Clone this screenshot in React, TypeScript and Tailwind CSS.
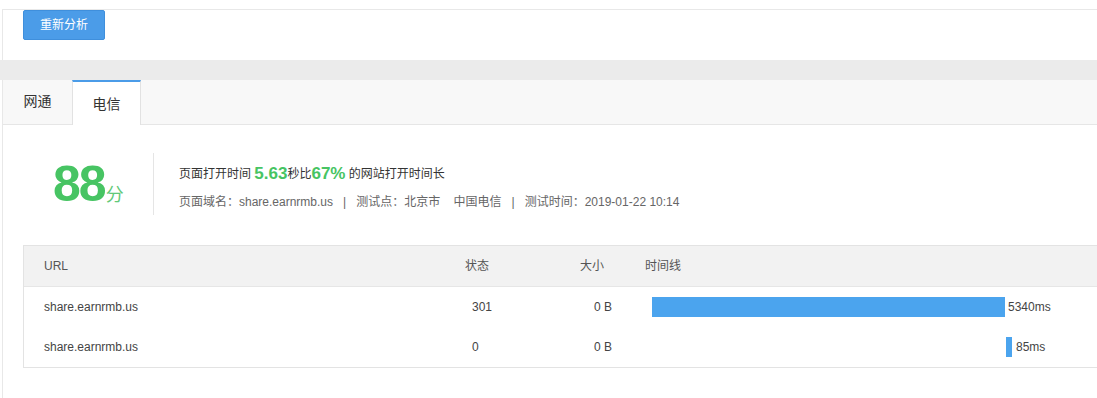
import React from "react";

const font = { fontFamily: '"Liberation Sans", Arial, "Noto Sans CJK SC", sans-serif' };

const rows = [
  { url: "share.earnrmb.us", status: "301", size: "0 B", offset: 0, width: 353, ms: "5340ms", gap: "ml-[3px]" },
  { url: "share.earnrmb.us", status: "0", size: "0 B", offset: 354, width: 6, ms: "85ms", gap: "ml-[4px]" },
];

export default function App() {
  return (
    <div className="w-[1097px] h-[398px] overflow-hidden bg-white text-[#333]" style={font}>
      {/* top panel */}
      <div className="mt-[9px] ml-[2px] h-[51px] border-l border-t border-[#e8e8e8] pl-[20px] w-[1200px]">
        <button className="w-[82px] h-[30px] bg-[#4b9ce8] text-white text-[12px] rounded-[2px] border border-[#3f8fdc]">
          重新分析
        </button>
      </div>
      {/* gray band */}
      <div className="h-[20px] bg-[#ebebeb]" />
      {/* second panel */}
      <div className="ml-[2px] border-l border-[#e8e8e8] w-[1200px] h-[400px]">
        <div className="h-[45px] bg-[#f8f8f8] border-b border-[#e6e6e6] flex">
          <div className="w-[69px] flex items-center justify-center text-[14px] text-[#333] pb-[2px]">网通</div>
          <div className="w-[69px] h-[45px] bg-white border-t-2 border-t-[#4b9ce8] border-l border-r border-[#e2e2e2] flex items-center justify-center text-[14px] text-[#333] pt-[1px]">
            电信
          </div>
        </div>
        <div className="pl-[20px]">
          {/* score */}
          <div className="mt-[28px] h-[62px] flex">
            <div className="w-[130px] pl-[30px] pt-[6px] flex items-baseline">
              <span className="text-[50px] leading-[50px] font-bold text-[#47c463] tracking-[-2px]">88</span>
              <span className="text-[18px] text-[#62c978] ml-[1px]" style={{ fontFamily: '"Noto Sans CJK SC", sans-serif' }}>分</span>
            </div>
            <div className="border-l border-[#e5e5e5] pl-[25px]">
              <div className="mt-[11px] h-[20px] flex items-center text-[12px] text-[#333] whitespace-pre">
                <span>页面打开时间 </span>
                <span className="text-[17px] font-bold text-[#47c463]">5.63</span>
                <span>秒比</span>
                <span className="text-[17px] font-bold text-[#47c463]">67%</span>
                <span> 的网站打开时间长</span>
              </div>
              <div className="mt-[8px] h-[20px] flex items-center text-[12px] text-[#666] whitespace-pre">
                页面域名：share.earnrmb.us{"   |   "}测试点：北京市{"    "}中国电信{"   |   "}测试时间：2019-01-22 10:14
              </div>
            </div>
          </div>
          {/* table */}
          <div className="mt-[30px] border border-[#e3e3e3] w-[1100px] text-[12px]">
            <div className="h-[41px] bg-[#f2f2f2] border-b border-[#e6e6e6] flex items-center text-[#555]">
              <div className="w-[431px] pl-[20px]">URL</div>
              <div className="w-[110px] pl-[10px]">状态</div>
              <div className="w-[65px] text-right pr-[26px]">大小</div>
              <div className="pl-[15px]">时间线</div>
            </div>
            {rows.map((r, i) => (
              <div key={i} className="h-[40px] flex items-center text-[#444]">
                <div className="w-[431px] pl-[20px]">{r.url}</div>
                <div className="w-[110px] pl-[17px]">{r.status}</div>
                <div className="w-[65px] text-right pr-[18px]">{r.size}</div>
                <div className="pl-[22px] flex items-center">
                  <div style={{ width: r.offset }} />
                  <div className="h-[20px] bg-[#4ba4ee]" style={{ width: r.width }} />
                  <span className={`${r.gap} text-[#444]`}>{r.ms}</span>
                </div>
              </div>
            ))}
          </div>
        </div>
      </div>
    </div>
  );
}
